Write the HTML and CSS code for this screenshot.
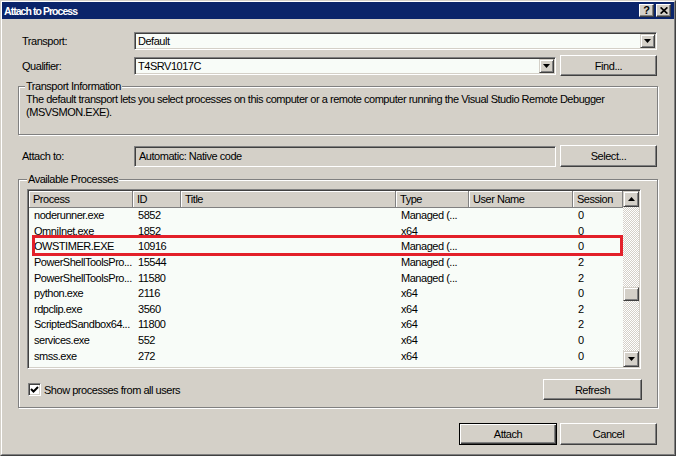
FILE: index.html
```html
<!DOCTYPE html>
<html>
<head>
<meta charset="utf-8">
<title>Attach to Process</title>
<link rel="stylesheet" href="styles.css">
</head>
<body>
<div class="window">
  <div class="frame">
    <div class="titlebar">
      <span class="title">Attach to Process</span>
      <div class="cap-buttons">
        <span class="cap-btn help">?</span>
        <span class="cap-btn close"><svg width="8" height="7" viewBox="0 0 8 7"><path d="M0.6 0.4 L7.4 6.6 M7.4 0.4 L0.6 6.6" stroke="#000" stroke-width="1.7" fill="none"/></svg></span>
      </div>
    </div>
    <div class="content">
      <div class="row r-transport">
        <span class="lbl">Transport:</span>
        <div class="combo combo-full">
          <span class="combo-text">Default</span>
          <span class="drop-btn"><svg width="7" height="4" viewBox="0 0 7 4"><polygon points="0,0 7,0 3.5,4" fill="#000"/></svg></span>
        </div>
      </div>
      <div class="row r-qualifier">
        <span class="lbl">Qualifier:</span>
        <div class="combo combo-short">
          <span class="combo-text">T4SRV1017C</span>
          <span class="drop-btn"><svg width="7" height="4" viewBox="0 0 7 4"><polygon points="0,0 7,0 3.5,4" fill="#000"/></svg></span>
        </div>
        <button class="btn side-btn">Find...</button>
      </div>
      <fieldset class="group info">
        <legend>Transport Information</legend>
        <p>The default transport lets you select processes on this computer or a remote computer running the Visual Studio Remote Debugger<br>(MSVSMON.EXE).</p>
      </fieldset>
      <div class="row r-attach">
        <span class="lbl">Attach to:</span>
        <div class="readonly-field">Automatic: Native code</div>
        <button class="btn side-btn tall">Select...</button>
      </div>
      <fieldset class="group procs">
        <legend>Available Processes</legend>
        <div class="list">
          <div class="list-main">
            <div class="list-header">
              <div class="hcell">Process</div>
              <div class="hcell">ID</div>
              <div class="hcell">Title</div>
              <div class="hcell">Type</div>
              <div class="hcell">User Name</div>
              <div class="hcell">Session</div>
            </div>
            <div class="rows">
              <div class="lrow"><span>noderunner.exe</span><span>5852</span><span></span><span>Managed (...</span><span></span><span>0</span></div>
              <div class="lrow"><span>OmniInet.exe</span><span>1852</span><span></span><span>x64</span><span></span><span>0</span></div>
              <div class="lrow marked"><span>OWSTIMER.EXE</span><span>10916</span><span></span><span>Managed (...</span><span></span><span>0</span><i class="highlight-box"></i></div>
              <div class="lrow"><span>PowerShellToolsPro...</span><span>15544</span><span></span><span>Managed (...</span><span></span><span>2</span></div>
              <div class="lrow"><span>PowerShellToolsPro...</span><span>11580</span><span></span><span>Managed (...</span><span></span><span>2</span></div>
              <div class="lrow"><span>python.exe</span><span>2116</span><span></span><span>x64</span><span></span><span>0</span></div>
              <div class="lrow"><span>rdpclip.exe</span><span>3560</span><span></span><span>x64</span><span></span><span>2</span></div>
              <div class="lrow"><span>ScriptedSandbox64...</span><span>11800</span><span></span><span>x64</span><span></span><span>2</span></div>
              <div class="lrow"><span>services.exe</span><span>552</span><span></span><span>x64</span><span></span><span>0</span></div>
              <div class="lrow"><span>smss.exe</span><span>272</span><span></span><span>x64</span><span></span><span>0</span></div>
              <div class="lrow"><span>SMSvcHost.exe</span><span>14720</span><span></span><span>Managed (...</span><span>NT AUTHORITY\NET...</span><span>0</span></div>
            </div>
          </div>
          <div class="scrollbar">
            <span class="sb-btn"><svg width="7" height="4" viewBox="0 0 7 4"><polygon points="3.5,0 7,4 0,4" fill="#000"/></svg></span>
            <div class="sb-track"><span class="sb-thumb"></span></div>
            <span class="sb-btn"><svg width="7" height="4" viewBox="0 0 7 4"><polygon points="0,0 7,0 3.5,4" fill="#000"/></svg></span>
          </div>
        </div>
        <div class="procs-footer">
          <label class="check">
            <span class="checkbox"><svg width="9" height="9" viewBox="0 0 9 9"><path d="M1 4 L3.5 6.5 L8 2" stroke="#000" stroke-width="2" fill="none"/></svg></span>
            <span>Show processes from all users</span>
          </label>
          <button class="btn refresh">Refresh</button>
        </div>
      </fieldset>
      <div class="dialog-buttons">
        <button class="btn default-btn">Attach</button>
        <button class="btn cancel-btn">Cancel</button>
      </div>
    </div>
  </div>
</div>
</body>
</html>
```

FILE: styles.css
```css
* { box-sizing: border-box; }
html, body { margin: 0; padding: 0; }
body {
  width: 676px;
  height: 456px;
  overflow: hidden;
  background: #d4d0c8;
  font-family: "Liberation Sans", Arial, sans-serif;
  font-size: 11px;
  letter-spacing: -0.47px;
  color: #000;
}
.window {
  width: 676px;
  height: 456px;
  border: 1px solid;
  border-color: #d4d0c8 #404040 #404040 #d4d0c8;
  background: #d4d0c8;
}
.frame {
  height: 100%;
  border: 1px solid;
  border-color: #fff #808080 #808080 #fff;
  display: flex;
  flex-direction: column;
}
.titlebar {
  height: 17px;
  flex: none;
  background: #0a246a;
  color: #fff;
  display: flex;
  align-items: center;
  justify-content: space-between;
  padding: 0 3px 0 2px;
}
.title {
  font-family: "Liberation Sans", Arial, sans-serif;
  font-weight: bold;
  font-size: 10.5px;
  letter-spacing: -0.95px;
}
.cap-buttons { display: flex; gap: 2px; }
.cap-btn {
  width: 15px;
  height: 13px;
  background: #d4d0c8;
  border: 1px solid;
  border-color: #fff #404040 #404040 #fff;
  box-shadow: inset -1px -1px #808080;
  display: flex;
  align-items: center;
  justify-content: center;
  color: #000;
  font-weight: bold;
  font-size: 11px;
  line-height: 1;
  letter-spacing: 0;
}
.cap-btn svg { display: block; }

.content {
  flex: 1;
  display: flex;
  flex-direction: column;
  padding: 13px 16px 0 16px;
}
.row { display: flex; align-items: center; flex: none; }
.lbl { width: 116px; padding-left: 4px; flex: none; }
.r-transport { height: 18px; }
.r-qualifier { height: 21px; margin-top: 5px; }
.r-attach { height: 22px; margin-top: 10px; }

.combo {
  height: 18px;
  display: flex;
  align-items: center;
  background: #f8fcf8;
  border: 1px solid;
  border-color: #808080 #fff #fff #808080;
  box-shadow: inset 1px 1px #404040, inset -1px -1px #d4d0c8;
  padding: 1px 1px 1px 3px;
}
.combo-full { flex: 1; margin-right: 1px; }
.combo-short { width: 422px; flex: none; }
.combo-text { flex: 1; white-space: nowrap; }
.drop-btn {
  width: 15px;
  height: 14px;
  background: #d4d0c8;
  border: 1px solid;
  border-color: #d4d0c8 #404040 #404040 #d4d0c8;
  box-shadow: inset 1px 1px #fff, inset -1px -1px #808080;
  display: flex;
  align-items: center;
  justify-content: center;
}
.drop-btn svg, .sb-btn svg { display: block; }

.readonly-field {
  width: 422px;
  height: 21px;
  flex: none;
  background: #d4d0c8;
  border: 1px solid;
  border-color: #808080 #fff #fff #808080;
  box-shadow: inset 1px 1px #404040, inset -1px -1px #d4d0c8;
  padding-left: 4px;
  display: flex;
  align-items: center;
}

.btn {
  font: inherit;
  letter-spacing: inherit;
  color: #000;
  height: 21px;
  padding: 0;
  background: #d4d0c8;
  border: 1px solid;
  border-color: #fff #404040 #404040 #fff;
  box-shadow: inset -1px -1px #808080;
  text-align: center;
}
.side-btn { width: 97px; flex: none; margin-left: 4px; }
.side-btn.tall { height: 22px; }

.group {
  margin: 0;
  border: 1px solid #808080;
  box-shadow: inset 1px 1px #fff, 1px 1px #fff;
  min-inline-size: 0;
}
.group legend {
  padding: 0 1px;
  line-height: 13px;
  background: #d4d0c8;
}
.info { margin-top: 4px; padding: 0 8px 15px 6px; }
.info p { margin: 0 0 0 1px; line-height: 13px; }

.procs { margin-top: 6px; padding: 0 16px 7px 8px; }
.list {
  margin-top: 3px;
  height: 180px;
  width: 614px;
  display: flex;
  background: #f8fcf8;
  border: 1px solid;
  border-color: #808080 #fff #fff #808080;
  box-shadow: inset 1px 1px #404040, inset -1px -1px #d4d0c8;
  padding: 1px;
}
.list-main {
  flex: 1;
  overflow: hidden;
  --cols: 104px 48px 215px 73px 104px 50px;
}
.list-header {
  display: grid;
  grid-template-columns: var(--cols);
  height: 17px;
}
.hcell {
  height: 17px;
  line-height: 16px;
  padding-left: 4px;
  background: #d4d0c8;
  border-right: 1px solid #808080;
  border-bottom: 1px solid #808080;
  box-shadow: inset 1px 1px #fff;
  white-space: nowrap;
  overflow: hidden;
}
.rows { display: flex; flex-direction: column; }
.lrow {
  position: relative;
  display: grid;
  grid-template-columns: var(--cols);
  height: 15.6px;
  align-items: center;
  flex: none;
}
.lrow span {
  padding-left: 5px;
  white-space: nowrap;
  overflow: hidden;
  line-height: 13px;
}
.highlight-box {
  position: absolute;
  top: -4px;
  bottom: -1px;
  left: 3px;
  right: 0;
  border: 3px solid #e3202a;
  pointer-events: none;
}

.scrollbar {
  width: 16px;
  flex: none;
  display: flex;
  flex-direction: column;
}
.sb-btn, .sb-thumb {
  width: 16px;
  height: 16px;
  flex: none;
  background: #d4d0c8;
  border: 1px solid;
  border-color: #d4d0c8 #404040 #404040 #d4d0c8;
  box-shadow: inset 1px 1px #fff, inset -1px -1px #808080;
  display: flex;
  align-items: center;
  justify-content: center;
}
.sb-thumb { display: block; height: 14px; }
.sb-track {
  flex: 1;
  padding-top: 80px;
  background-color: #fff;
  background-image: conic-gradient(#d4d0c8 25%, #fff 0 50%, #d4d0c8 0 75%, #fff 0);
  background-size: 2px 2px;
}

.procs-footer {
  margin-top: 10px;
  height: 21px;
  display: flex;
  align-items: center;
  justify-content: space-between;
}
.check { display: flex; align-items: center; gap: 3px; margin-left: 1px; }
.checkbox {
  width: 13px;
  height: 13px;
  background: #fff;
  border: 1px solid;
  border-color: #808080 #fff #fff #808080;
  box-shadow: inset 1px 1px #404040, inset -1px -1px #d4d0c8;
  display: flex;
  align-items: center;
  justify-content: center;
}
.checkbox svg { display: block; }
.refresh { width: 99px; margin-right: -1px; }

.dialog-buttons {
  margin-top: 15px;
  display: flex;
  justify-content: flex-end;
  gap: 3px;
  padding-right: 1px;
}
.default-btn {
  width: 98px;
  height: 22px;
  border: 1px solid #000;
  box-shadow: inset 1px 1px #fff, inset -1px -1px #404040, inset -2px -2px #808080;
}
.cancel-btn { width: 97px; height: 22px; }
```
